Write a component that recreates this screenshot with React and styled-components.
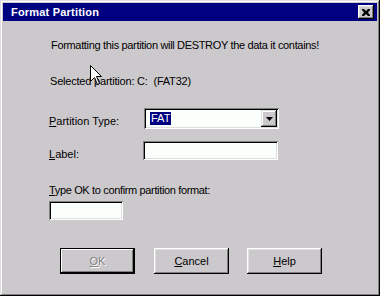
import React from "react";
import styled, { createGlobalStyle } from "styled-components";

const Global = createGlobalStyle`
  html, body { margin: 0; padding: 0; background: #ccc9cc; }
  body { font-family: "Liberation Sans", Arial, sans-serif; font-size: 11px; color: #000; }
`;

const bg = "#ccc9cc";

const Window = styled.div`
  position: relative;
  width: 380px;
  height: 296px;
  box-sizing: border-box;
  padding: 3px;
  background: ${bg};
  box-shadow: inset -1px -1px #000, inset 1px 1px #dfdfdf, inset -2px -2px #808080, inset 2px 2px #fff;
  display: flex;
  flex-direction: column;
`;

const TitleBar = styled.div`
  height: 18px;
  background: #000080;
  display: flex;
  align-items: center;
  justify-content: space-between;
  padding: 0 3px 0 8px;
`;

const Title = styled.span`
  color: #fff;
  font-weight: bold;
  font-size: 11px;
  line-height: 13px;
  letter-spacing: 0.2px;
`;

const CloseButton = styled.div`
  width: 16px;
  height: 14px;
  box-sizing: border-box;
  background: ${bg};
  box-shadow: inset -1px -1px #000, inset 1px 1px #fff, inset -2px -2px #808080, inset 2px 2px #dfdfdf;
  display: flex;
  align-items: center;
  justify-content: center;
`;

const Content = styled.div`
  padding-left: 46px;
  display: flex;
  flex-direction: column;
  align-items: flex-start;
`;

const Text = styled.div`
  line-height: 13px;
  white-space: pre;
  letter-spacing: ${(p) => p.$ls ?? 0}px;
  margin-top: ${(p) => p.$mt || 0}px;
  margin-left: ${(p) => p.$ml || 0}px;
`;

const FieldRow = styled.div`
  display: flex;
  align-items: flex-start;
  margin-top: ${(p) => p.$mt}px;
`;

const FieldLabel = styled.div`
  width: ${(p) => p.$w}px;
  padding-top: 7px;
  line-height: 13px;
`;

const Sunken = styled.div`
  position: relative;
  width: ${(p) => p.$w}px;
  height: ${(p) => p.$h}px;
  box-sizing: border-box;
  background: #fbfffb;
  box-shadow: inset 1px 1px #808080, inset -1px -1px #fff, inset 2px 2px #000, inset -2px -2px #dfdfdf;
  display: flex;
  align-items: center;
  padding: 2px;
`;

const Selection = styled.span`
  background: #000080;
  color: #fff;
  line-height: 13px;
  padding: 0 1px;
  margin-left: 4px;
`;

const DropButton = styled.div`
  margin-left: auto;
  width: 16px;
  height: 17px;
  box-sizing: border-box;
  background: ${bg};
  box-shadow: inset -1px -1px #000, inset 1px 1px #dfdfdf, inset -2px -2px #808080, inset 2px 2px #fff;
  display: flex;
  align-items: center;
  justify-content: center;
`;

const ButtonRow = styled.div`
  display: flex;
  gap: 19px;
  margin-top: 28px;
  margin-left: 11px;
`;

const Button = styled.div`
  width: 75px;
  height: 26px;
  box-sizing: border-box;
  display: flex;
  align-items: center;
  justify-content: center;
  line-height: 13px;
  background: ${bg};
  margin-left: ${(p) => p.$ml || 0}px;
  color: ${(p) => (p.$disabled ? "#808080" : "#000")};
  text-shadow: ${(p) => (p.$disabled ? "1px 1px #fff" : "none")};
  box-shadow: ${(p) =>
    p.$default
      ? "inset 0 0 0 1px #000, inset -2px -2px #000, inset 2px 2px #fff, inset -3px -3px #808080"
      : "inset -1px -1px #000, inset 1px 1px #fff, inset -2px -2px #808080, inset 2px 2px #dfdfdf"};
`;

const Cursor = styled.svg`
  position: absolute;
  left: 90px;
  top: 65px;
`;

export default function App() {
  return (
    <>
      <Global />
      <Window>
        <TitleBar>
          <Title>Format Partition</Title>
          <CloseButton>
            <svg width="8" height="7" viewBox="0 0 8 7">
              <path d="M0 0h2l2 2 2-2h2v1L6 3.5 8 6v1H6L4 5 2 7H0V6l2-2.5L0 1z" fill="#000" />
            </svg>
          </CloseButton>
        </TitleBar>
        <Content>
          <Text $mt={18} $ml={2} $ls={-0.33}>Formatting this partition will DESTROY the data it contains!</Text>
          <Text $mt={23} $ml={1} $ls={-0.2}>{"Selected partition: C:  (FAT32)"}</Text>
          <FieldRow $mt={20}>
            <FieldLabel $w={95}>
              <u>P</u>artition Type:
            </FieldLabel>
            <Sunken $w={135} $h={21}>
              <Selection>FAT</Selection>
              <DropButton>
                <svg width="7" height="4" viewBox="0 0 7 4">
                  <path d="M0 0h7L3.5 4z" fill="#000" />
                </svg>
              </DropButton>
            </Sunken>
          </FieldRow>
          <FieldRow $mt={12}>
            <FieldLabel $w={94}>
              <u>L</u>abel:
            </FieldLabel>
            <Sunken $w={135} $h={19} />
          </FieldRow>
          <Text $mt={23} $ls={-0.35}>
            <u>T</u>ype OK to confirm partition format:
          </Text>
          <Text $mt={4}>
            <Sunken $w={74} $h={19} />
          </Text>
          <ButtonRow>
            <Button $default $disabled>
              <span><u>O</u>K</span>
            </Button>
            <Button>
              <span><u>C</u>ancel</span>
            </Button>
            <Button $ml={-1}>
              <span><u>H</u>elp</span>
            </Button>
          </ButtonRow>
        </Content>
        <Cursor width="13" height="21" viewBox="0 0 13 21">
          <path d="M0.5 0.5V16.5L4.5 12.5L7.5 19.5L9.5 18.5L6.5 11.5H11.5Z" fill="#fff" stroke="#000" strokeWidth="1" />
        </Cursor>
      </Window>
    </>
  );
}
